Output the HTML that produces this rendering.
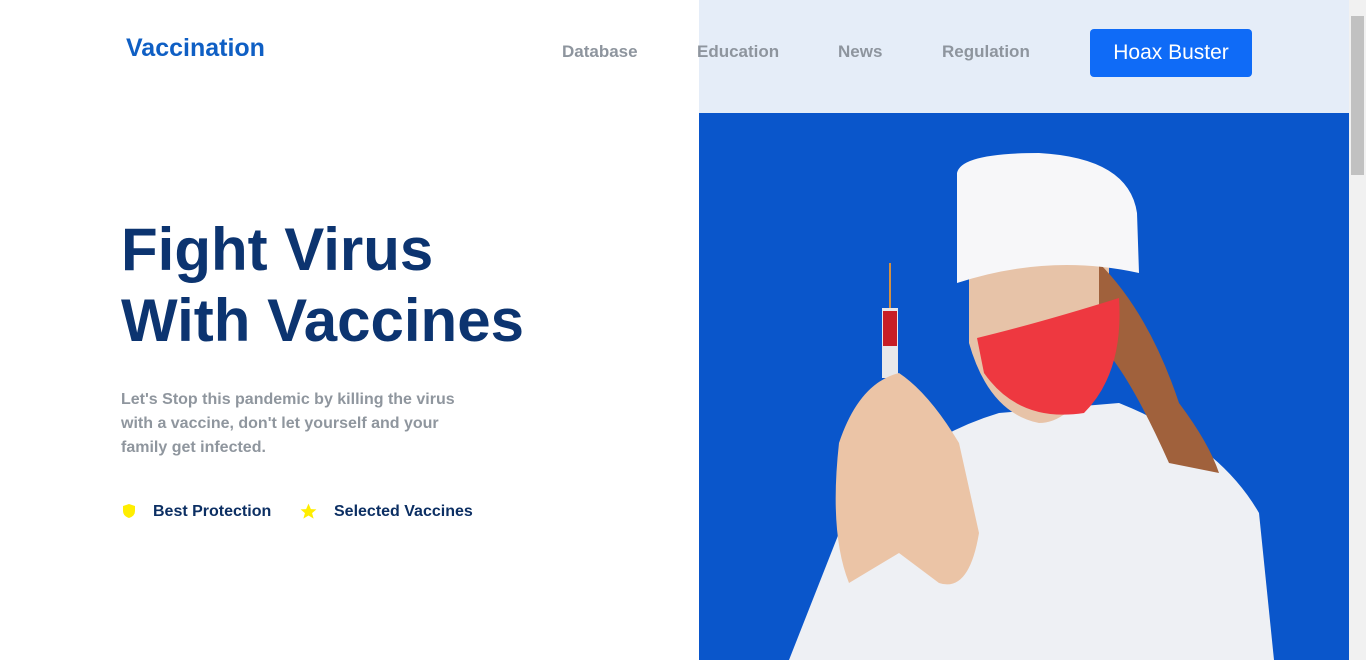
<!DOCTYPE html>
<html><head><style>
*{margin:0;padding:0;box-sizing:border-box}
body{width:1366px;height:660px;overflow:hidden;background:#fff;font-family:"Liberation Sans",Arial,sans-serif;position:relative}
.rp{position:absolute;left:699px;top:0;width:650px;height:113px;background:#e5edf8}
.img{position:absolute;left:699px;top:113px;width:650px;height:547px;background:#0a56cb;overflow:hidden}
.sb{position:absolute;left:1349px;top:0;width:17px;height:660px;background:#f1f1f1}
.sb .th{position:absolute;left:2px;top:16px;width:13px;height:159px;background:#c1c1c1}
.logo{position:absolute;left:126px;top:34px;font-size:25px;font-weight:bold;color:#0f5fc4}
.nav{position:absolute;top:42px;font-size:17px;font-weight:bold;color:#8e959e}
.btn{position:absolute;left:1090px;top:29px;width:162px;height:48px;background:#0f6bf7;border-radius:4px;color:#fff;font-size:21px;text-align:center;line-height:48px}
h1{position:absolute;left:121px;top:214px;font-size:60px;line-height:71px;color:#0c3470;font-weight:bold}
.p{position:absolute;left:121px;top:388px;font-size:16px;line-height:24px;color:#8f969e;font-weight:bold}
.f{position:absolute;top:503px;font-size:16px;font-weight:bold;color:#0c2f63}
</style></head><body>
<div class="rp"></div>
<div class="img">
<svg width="650" height="547" viewBox="0 0 650 547">
<path d="M90 547 L140 420 Q200 330 300 300 L420 290 Q520 330 560 400 L575 547Z" fill="#eef0f4"/>
<path d="M270 120 Q280 60 340 55 Q400 60 410 120 L410 230 Q380 310 340 310 Q290 300 270 230Z" fill="#e7c3a8"/>
<path d="M400 150 Q450 200 480 290 Q510 330 520 360 L470 350 Q430 260 400 230Z" fill="#a0613c"/>
<path d="M258 60 Q262 40 340 40 Q430 45 438 100 L440 160 Q350 140 258 170Z" fill="#f7f7f9"/>
<path d="M278 225 Q340 210 420 185 Q425 260 385 300 Q320 310 285 260Z" fill="#ee3840"/>
<rect x="183" y="195" width="16" height="70" fill="#e8e8ea"/>
<rect x="184" y="198" width="14" height="35" fill="#c71d25"/>
<rect x="190" y="150" width="2" height="45" fill="#d49040"/>
<path d="M140 330 Q160 270 200 260 Q230 280 260 330 L280 420 Q270 480 240 470 L200 440 L150 470 Q130 420 140 330Z" fill="#ebc4a6"/>
</svg>
</div>
<div class="sb"><div class="th"></div></div>
<div class="logo">Vaccination</div>
<div class="nav" style="left:562px">Database</div>
<div class="nav" style="left:697px">Education</div>
<div class="nav" style="left:838px">News</div>
<div class="nav" style="left:942px">Regulation</div>
<div class="btn">Hoax Buster</div>
<h1>Fight Virus<br>With Vaccines</h1>
<div class="p">Let's Stop this pandemic by killing the virus<br>with a vaccine, don't let yourself and your<br>family get infected.</div>
<svg style="position:absolute;left:121px;top:503px" width="16" height="16" viewBox="0 0 16 16"><path d="M8 1 L14 3 L14 8 Q14 13 8 15 Q2 13 2 8 L2 3Z" fill="#ffee00"/></svg>
<div class="f" style="left:153px">Best Protection</div>
<svg style="position:absolute;left:299px;top:502px" width="19" height="19" viewBox="0 0 24 24"><path d="M12 2 L15 9 L22 9.3 L16.5 14 L18.5 21 L12 17 L5.5 21 L7.5 14 L2 9.3 L9 9Z" fill="#ffee00"/></svg>
<div class="f" style="left:334px">Selected Vaccines</div>
</body></html>
